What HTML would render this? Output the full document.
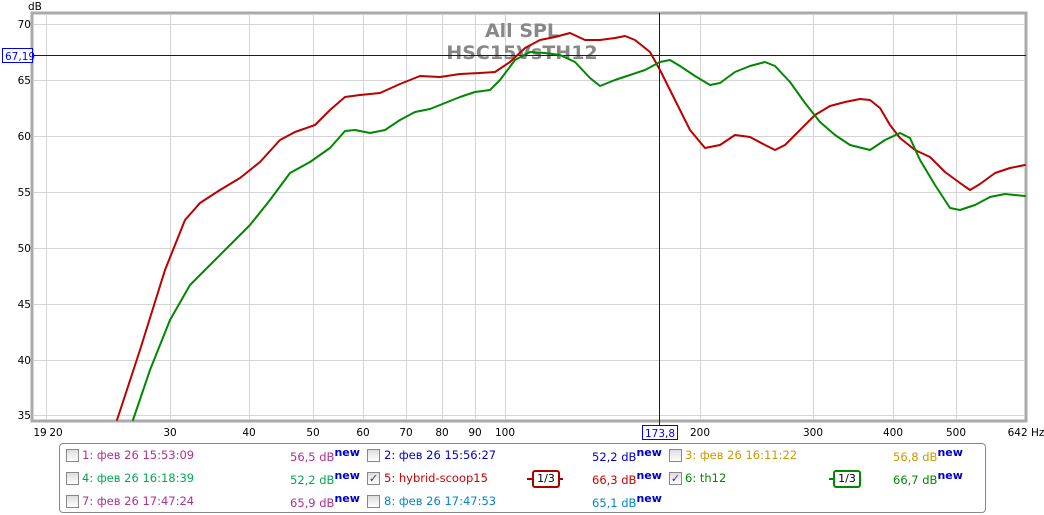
<!DOCTYPE html><html><head><meta charset="utf-8"><style>
body{margin:0;width:1044px;height:515px;background:#fff;font-family:"DejaVu Sans","Liberation Sans",sans-serif;overflow:hidden;position:relative}
.t{position:absolute;font-size:11.5px;white-space:nowrap}
.cb{position:absolute;width:11px;height:11px;border:1px solid #888;background:linear-gradient(#ddd,#fff)}
sup{font-weight:bold;color:#00c;font-size:11px}
</style></head><body>
<svg width="1044" height="440" style="position:absolute;left:0;top:0" font-family="DejaVu Sans, Liberation Sans" font-size="10.5">
<text x="28" y="10" fill="#000">dB</text>
<rect x="32" y="13" width="994" height="408" fill="#fff" stroke="#aaa" stroke-width="3"/>
<g stroke="#d4d4d4" stroke-width="1">
<line x1="34" x2="1024" y1="24.5" y2="24.5"/><line x1="34" x2="1024" y1="80.5" y2="80.5"/><line x1="34" x2="1024" y1="136.5" y2="136.5"/><line x1="34" x2="1024" y1="192.5" y2="192.5"/><line x1="34" x2="1024" y1="248.5" y2="248.5"/><line x1="34" x2="1024" y1="304.5" y2="304.5"/><line x1="34" x2="1024" y1="360.5" y2="360.5"/><line x1="34" x2="1024" y1="415.5" y2="415.5"/>
<line x1="46.5" x2="46.5" y1="15" y2="420"/><line x1="170.5" x2="170.5" y1="15" y2="420"/><line x1="249.5" x2="249.5" y1="15" y2="420"/><line x1="313.5" x2="313.5" y1="15" y2="420"/><line x1="363.5" x2="363.5" y1="15" y2="420"/><line x1="406.5" x2="406.5" y1="15" y2="420"/><line x1="442.5" x2="442.5" y1="15" y2="420"/><line x1="475.5" x2="475.5" y1="15" y2="420"/><line x1="505.5" x2="505.5" y1="15" y2="420"/><line x1="700.5" x2="700.5" y1="15" y2="420"/><line x1="813.5" x2="813.5" y1="15" y2="420"/><line x1="893.5" x2="893.5" y1="15" y2="420"/><line x1="956.5" x2="956.5" y1="15" y2="420"/>
</g>
<g fill="#000" text-anchor="end"><text x="31" y="28">70</text><text x="31" y="84">65</text><text x="31" y="140">60</text><text x="31" y="196">55</text><text x="31" y="252">50</text><text x="31" y="308">45</text><text x="31" y="364">40</text><text x="31" y="419">35</text></g>
<text x="522" y="37" font-size="19" font-weight="bold" fill="#888" text-anchor="middle">All SPL</text>
<text x="522" y="59" font-size="19" font-weight="bold" fill="#888" text-anchor="middle">HSC15VsTH12</text>
<line x1="32" x2="1026" y1="55.5" y2="55.5" stroke="#00f"/>
<rect x="2.5" y="48.5" width="30" height="14" fill="#fff" stroke="#00f"/><text x="5" y="60" fill="#00f">67,19</text>
<line x1="659.5" x2="659.5" y1="13" y2="432" stroke="#00f"/>
<g fill="none" stroke-width="2" stroke-linejoin="round" stroke-linecap="round">
<polyline stroke="#b00" points="117,420 140,350 165,270 185,220 200,203 220,190 240,178 260,162 280,140 295,132 315,125 330,110 345,97 360,95 380,93 400,84 420,76 440,77 460,74 480,73 495,72 510,62 525,48 540,40 555,37 570,33 585,40 600,40 615,38 625,36 635,40 650,52 660,70 675,100 690,130 705,148 720,145 735,135 750,137 765,145 775,150 785,145 800,130 815,115 830,106 845,102 860,99 870,100 880,108 890,125 900,138 915,150 930,157 945,172 960,183 970,190 980,184 995,173 1010,168 1025,165"/>
<polyline stroke="#080" points="133,420 150,370 170,320 190,285 210,265 230,245 250,225 270,200 290,173 310,162 330,148 345,131 355,130 370,133 385,130 400,120 415,112 430,109 445,103 460,97 475,92 490,90 500,80 515,60 530,52 545,53 560,55 575,62 590,78 600,86 615,80 630,75 645,70 660,62 670,60 680,66 695,76 710,85 720,83 735,72 750,66 765,62 775,66 790,82 805,103 820,122 835,135 850,145 870,150 885,140 900,133 910,138 920,160 935,185 950,208 960,210 975,205 990,197 1005,194 1025,196"/>
</g>
<g fill="#000" text-anchor="middle"><text x="40" y="436">19</text><text x="56" y="436">20</text><text x="170" y="436">30</text><text x="249" y="436">40</text><text x="313" y="436">50</text><text x="363" y="436">60</text><text x="406" y="436">70</text><text x="442" y="436">80</text><text x="475" y="436">90</text><text x="505" y="436">100</text><text x="700" y="436">200</text><text x="813" y="436">300</text><text x="893" y="436">400</text><text x="956" y="436">500</text><text x="1026" y="436">642 Hz</text></g>
<rect x="642.5" y="425.5" width="35" height="14" fill="#fff" stroke="#00f"/><text x="660" y="437" fill="#00f" text-anchor="middle">173,8</text>
</svg>
<div style="position:absolute;left:59px;top:443px;width:925px;height:68px;border:1px solid #888;border-radius:4px"></div>
<div class="cb" style="left:66px;top:449px"></div><div class="t" style="left:82px;top:448px;color:#b03090">1: фев 26 15:53:09</div><div class="t" style="left:290px;top:446px;color:#b03090">56,5 dB<sup>new</sup></div>
<div class="cb" style="left:66px;top:472px"></div><div class="t" style="left:82px;top:471px;color:#0a5">4: фев 26 16:18:39</div><div class="t" style="left:290px;top:469px;color:#0a5">52,2 dB<sup>new</sup></div>
<div class="cb" style="left:66px;top:495px"></div><div class="t" style="left:82px;top:494px;color:#b03090">7: фев 26 17:47:24</div><div class="t" style="left:290px;top:492px;color:#b03090">65,9 dB<sup>new</sup></div>
<div class="cb" style="left:367px;top:449px"></div><div class="t" style="left:384px;top:448px;color:#00c">2: фев 26 15:56:27</div><div class="t" style="left:592px;top:446px;color:#00c">52,2 dB<sup>new</sup></div>
<div class="cb" style="left:367px;top:472px;color:#336;font-size:11px;line-height:11px;text-align:center">✓</div><div class="t" style="left:384px;top:471px;color:#c00">5: hybrid-scoop15</div><div class="t" style="left:592px;top:469px;color:#c00">66,3 dB<sup>new</sup></div>
<div style="position:absolute;left:527px;top:478px;width:36px;height:2px;background:#a00"></div><div class="t" style="left:532px;top:470px;width:24px;height:14px;border:2px solid #a00;border-radius:3px;background:#fff;font-size:11px;text-align:center;line-height:14px">1/3</div>
<div class="cb" style="left:669px;top:472px;color:#336;font-size:11px;line-height:11px;text-align:center">✓</div><div class="t" style="left:685px;top:471px;color:#080">6: th12</div><div class="t" style="left:893px;top:469px;color:#080">66,7 dB<sup>new</sup></div>
<div style="position:absolute;left:829px;top:478px;width:32px;height:2px;background:#080"></div><div class="t" style="left:833px;top:470px;width:24px;height:14px;border:2px solid #080;border-radius:3px;background:#fff;font-size:11px;text-align:center;line-height:14px">1/3</div>
<div class="cb" style="left:669px;top:449px"></div><div class="t" style="left:685px;top:448px;color:#c90">3: фев 26 16:11:22</div><div class="t" style="left:893px;top:446px;color:#c90">56,8 dB<sup>new</sup></div>
<div class="cb" style="left:367px;top:495px"></div><div class="t" style="left:384px;top:494px;color:#08c">8: фев 26 17:47:53</div><div class="t" style="left:592px;top:492px;color:#08c">65,1 dB<sup>new</sup></div>
</body></html>
